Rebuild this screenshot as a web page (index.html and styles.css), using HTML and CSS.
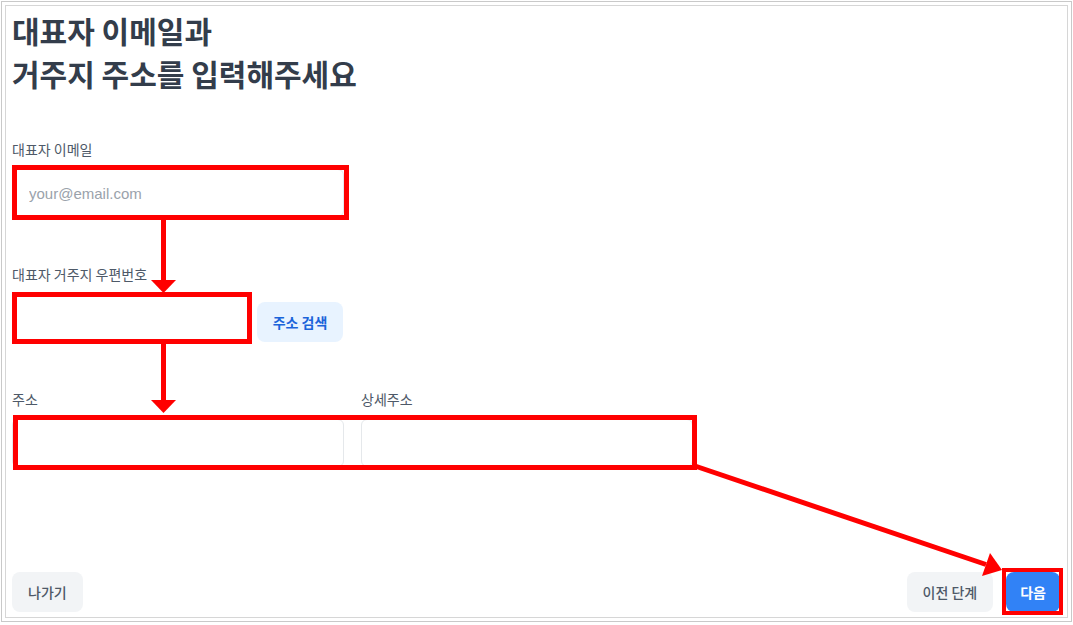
FILE: index.html
```html
<!DOCTYPE html>
<html>
<head>
    <title>대표자 정보 입력</title>
    <link rel="stylesheet" href="styles.css">
</head>
<body>
    <div class="frame">
        <div class="page">
            <h1 class="title">대표자 이메일과<br>거주지 주소를 입력해주세요</h1>

            <div class="fields">
                <div class="field">
                    <label for="email">대표자 이메일</label>
                    <input type="text" id="email" class="input email" placeholder="your@email.com">
                </div>
                <div class="field">
                    <label for="zip">대표자 거주지 우편번호</label>
                    <div class="zip-row">
                        <input type="text" id="zip" class="input zip">
                        <button class="btn btn-search">주소 검색</button>
                    </div>
                </div>
                <div class="address-row">
                    <div class="field">
                        <label for="addr">주소</label>
                        <input type="text" id="addr" class="input">
                    </div>
                    <div class="field">
                        <label for="addrDetail">상세주소</label>
                        <input type="text" id="addrDetail" class="input">
                    </div>
                </div>
            </div>

            <div class="footer">
                <button class="btn btn-gray">나가기</button>
                <div class="footer-right">
                    <button class="btn btn-gray">이전 단계</button>
                    <button class="btn btn-primary">다음</button>
                </div>
            </div>
        </div>
    </div>

    <!-- red guide marks drawn over the form -->
    <svg class="marks" width="1073" height="625" viewBox="0 0 1073 625">
        <g fill="none" stroke="#ff0000" stroke-width="5">
            <rect x="14.5" y="167.5" width="332" height="50"/>
            <rect x="14.5" y="294.5" width="235" height="47"/>
            <rect x="15.5" y="417.5" width="679" height="50"/>
            <rect x="1004" y="570" width="57" height="43" stroke-width="4"/>
            <line x1="163.5" y1="220" x2="163.5" y2="282"/>
            <line x1="163.5" y1="344" x2="163.5" y2="402"/>
            <line x1="695" y1="466" x2="986" y2="564.5"/>
        </g>
        <g fill="#ff0000">
            <polygon points="151,280 176,280 163.5,293"/>
            <polygon points="151,400 176,400 163.5,413"/>
            <polygon points="1002,570 982,576 990,553"/>
        </g>
    </svg>
</body>
</html>
```

FILE: styles.css
```css
body {
    margin: 0;
    background-color: #fff;
    font-family: "Noto Sans CJK KR", "Noto Sans", sans-serif;
}
.frame {
    margin: 1px;
    height: 621px;
    box-sizing: border-box;
    border: 1px solid #c9c9c9;
    padding: 3px;
}
.page {
    height: 100%;
    box-sizing: border-box;
    border: 1px solid #d6d6d6;
    padding: 3px 7px 5px 6px;
    display: flex;
    flex-direction: column;
}
.title {
    margin: 0 0 44px;
    font-size: 30px;
    line-height: 43px;
    font-weight: 700;
    color: #333d4b;
}
.fields {
    display: flex;
    flex-direction: column;
    gap: 47px;
}
.field {
    display: flex;
    flex-direction: column;
}
.field label {
    font-size: 14px;
    line-height: 20px;
    color: #4e5968;
    margin-bottom: 10px;
}
.input {
    height: 48px;
    box-sizing: border-box;
    border: 1px solid #e5e8eb;
    border-radius: 6px;
    padding: 0 16px;
    font-family: "Liberation Sans", Arial, sans-serif;
    font-size: 15px;
    color: #333d4b;
    background-color: #fff;
    outline: none;
}
.input::placeholder {
    color: #9aa2ab;
}
.email {
    width: 332px;
}
.zip-row {
    display: flex;
    align-items: flex-end;
    gap: 8px;
}
.zip {
    width: 237px;
}
.address-row {
    display: grid;
    grid-template-columns: 332px 332px;
    gap: 17px;
}
.address-row .input {
    width: 100%;
}
.btn {
    height: 40px;
    padding: 0 16px;
    border: none;
    border-radius: 8px;
    font-family: "Noto Sans CJK KR", sans-serif;
    font-size: 14px;
    font-weight: 500;
    cursor: pointer;
}
.btn-search {
    width: 86px;
    padding: 0;
    background-color: #e8f3ff;
    color: #1b64da;
    font-weight: 600;
}
.btn-gray {
    background-color: #f2f4f6;
    color: #4e5968;
}
.btn-primary {
    padding: 0 14px;
    background-color: #3182f6;
    color: #fff;
    font-weight: 700;
}
.footer {
    margin-top: auto;
    display: flex;
    justify-content: space-between;
    align-items: flex-end;
}
.footer-right {
    display: flex;
    gap: 13px;
}
.marks {
    position: absolute;
    top: 0;
    left: 0;
    pointer-events: none;
}
```
